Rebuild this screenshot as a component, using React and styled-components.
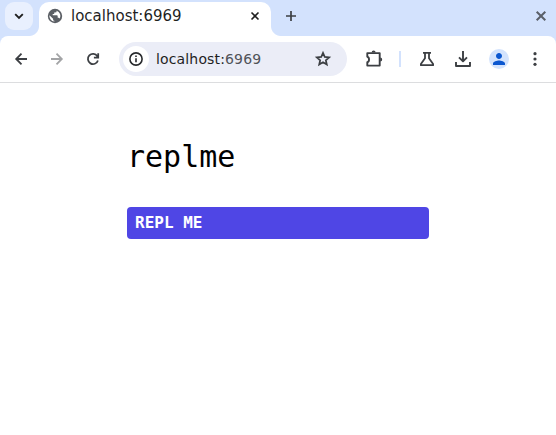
import React from "react";
import styled, { createGlobalStyle } from "styled-components";

const GlobalStyle = createGlobalStyle`
  *, *::before, *::after { box-sizing: border-box; }
  html, body { margin: 0; background: #fff; overflow: hidden; }
  button { border: 0; padding: 0; margin: 0; background: none; font: inherit; color: inherit; }
`;

const Browser = styled.div`
  display: flex;
  flex-direction: column;
  width: 556px;
  height: 435px;
  background: #d3e2fd;
  font-family: "DejaVu Sans", sans-serif;
  color: #1f1f1f;
`;

const TabStrip = styled.header`
  display: flex;
  height: 36px;
  padding-left: 5px;
`;

const TabSearch = styled.button`
  display: grid;
  place-items: center;
  width: 28px;
  height: 28px;
  margin: 2px 6px 0 0;
  border-radius: 9px;
  background: #e9f0fe;
`;

const Tab = styled.div`
  position: relative;
  display: flex;
  align-items: center;
  width: 232px;
  height: 34px;
  margin-top: 2px;
  padding: 0 8px 6px;
  border-radius: 10px 10px 0 0;
  background: #fff;

  &::before,
  &::after {
    content: "";
    position: absolute;
    bottom: 0;
    width: 10px;
    height: 10px;
  }
  &::before {
    left: -10px;
    background: radial-gradient(circle at 0 0, transparent 9.5px, #fff 10.5px);
  }
  &::after {
    right: -10px;
    background: radial-gradient(circle at 100% 0, transparent 9.5px, #fff 10.5px);
  }
`;

const TabTitle = styled.span`
  flex: 1;
  margin-left: 8px;
  font-size: 15px;
  line-height: 20px;
`;

const IconButton = styled.button`
  display: grid;
  place-items: center;
  flex: none;
  width: ${(p) => p.$w || 36}px;
  height: ${(p) => p.$h || 34}px;
  color: ${(p) => p.$color || "#3c3f43"};
`;

const NewTab = styled(IconButton)`
  margin: 2px 0 0 10px;
`;

const WindowClose = styled(IconButton)`
  margin: 2px 5px 0 auto;
`;

const Toolbar = styled.nav`
  display: flex;
  align-items: center;
  height: 47px;
  padding: 0 3px;
  border-bottom: 1px solid #dcdddf;
  border-radius: 8px 8px 0 0;
  background: #fff;
`;

const AddressBar = styled.div`
  display: flex;
  align-items: center;
  width: 229px;
  height: 34px;
  margin: 0 9px 0 8px;
  padding: 0 6px 0 4px;
  border-radius: 17px;
  background: #ebedf7;
`;

const SiteInfo = styled.span`
  display: grid;
  place-items: center;
  width: 26px;
  height: 26px;
  border-radius: 50%;
  background: #fff;
`;

const Url = styled.span`
  flex: 1;
  margin-left: 7px;
  font-size: 14px;
  letter-spacing: 0.15px;
  line-height: 18px;
`;

const Port = styled.span`
  color: #505359;
`;

const Divider = styled.span`
  width: 2px;
  height: 16px;
  margin: 0 8px 0 7px;
  background: #d3e2fd;
`;

const Avatar = styled.span`
  display: grid;
  place-items: center;
  width: 20px;
  height: 20px;
  border-radius: 50%;
  background: #d3e3fd;
  color: #0b57d0;
`;

const Page = styled.main`
  flex: 1;
  padding: 54px 127px 0;
  background: #fff;
  font-family: "DejaVu Sans Mono", monospace;
`;

const Title = styled.h1`
  margin: 0 0 30px;
  color: #000;
  font-size: 30px;
  font-weight: 400;
  line-height: 40px;
`;

const ReplButton = styled.button`
  display: block;
  width: 302px;
  height: 32px;
  padding: 0 8px;
  border-radius: 4px;
  background: #4f46e5;
  color: #fff;
  font-size: 16px;
  font-weight: 700;
  line-height: 32px;
  text-align: left;
`;

const Line = ({ size, d, width = 2, join = "miter" }) => (
  <svg
    width={size}
    height={size}
    viewBox={`0 0 ${size} ${size}`}
    fill="none"
    stroke="currentColor"
    strokeWidth={width}
    strokeLinejoin={join}
  >
    <path d={d} />
  </svg>
);

export default function App() {
  return (
    <>
      <GlobalStyle />
      <Browser>
        <TabStrip>
          <TabSearch aria-label="Search tabs">
            <Line size={12} width={1.9} d="M2.200 4.200 6 8l3.800-3.800" />
          </TabSearch>
          <Tab>
            <IconButton as="span" $w={16} $h={16} $color="#5b5f65">
              <svg width="16" height="16" viewBox="0 0 16 16">
                <circle cx="8" cy="8" r="7.200" fill="currentColor" />
                <path
                  d="M9.600 2.700v.5c0 .8-.5 1.200-1.300 1.200H7.200v1.500H5.700v1.400h3.900c.7 0 1.100.5 1.100 1.200v1.200h.7c.7 0 1.200.4 1.400 1A5.700 5.700 0 0 0 9.600 2.700z"
                  fill="#fff"
                />
                <path
                  d="M2.400 7.200l3.700 3.500v.7c0 .8.600 1.300 1.300 1.300v.9A5.700 5.700 0 0 1 2.400 7.200z"
                  fill="#fff"
                />
              </svg>
            </IconButton>
            <TabTitle>localhost:6969</TabTitle>
            <IconButton $w={16} $h={16} $color="#1f1f1f" aria-label="Close tab">
              <Line size={10} width={1.6} d="M1.500 1.500l7 7m0-7l-7 7" />
            </IconButton>
          </Tab>
          <NewTab $w={20} $h={28} aria-label="New tab">
            <Line size={12} width={1.7} d="M6 1v10M1 6h10" />
          </NewTab>
          <WindowClose $w={20} $h={28} $color="#5a5f68" aria-label="Close window">
            <Line size={12} width={2} d="M1.700 1.700l8.600 8.600m0-8.600l-8.600 8.600" />
          </WindowClose>
        </TabStrip>
        <Toolbar>
          <IconButton aria-label="Back">
            <Line size={14} width={1.8} d="M13 7H2.200M7.500 1.700 2.200 7l5.300 5.300" />
          </IconButton>
          <IconButton $color="#a3a4a6" aria-label="Forward">
            <Line size={14} width={1.8} d="M1 7h10.800M6.500 1.700 11.800 7l-5.300 5.300" />
          </IconButton>
          <IconButton aria-label="Reload">
            <Line size={14} width={1.8} d="M11.900 8.500A5.100 5.100 0 1 1 11.300 4.200L12 5.100M12.200 1.300v4.400H7.900" />
          </IconButton>
          <AddressBar>
            <SiteInfo>
              <svg width="16" height="16" viewBox="0 0 16 16" fill="none" stroke="#27292c" strokeWidth="1.6">
                <circle cx="8" cy="8" r="6.100" />
                <path d="M8 7.300v4M8 4.500v1.600" />
              </svg>
            </SiteInfo>
            <Url>
              localhost:<Port>6969</Port>
            </Url>
            <IconButton aria-label="Bookmark">
              <Line
                size={18}
                width={1.7}
                d="M9 2.900l1.750 4.050 4.400.4-3.300 2.900.95 4.300L9 12.250l-3.800 2.300.95-4.300-3.300-2.900 4.400-.4z"
              />
            </IconButton>
          </AddressBar>
          <IconButton aria-label="Extensions">
            <svg width="18" height="18" viewBox="0 0 18 18" fill="none" stroke="currentColor" strokeWidth="1.900" strokeLinejoin="round">
              <path d="M2.300 3.100h12.400v12.500H2.300V12.200c2.300-.5 2.300-4.900 0-5.400z" />
              <path d="M6.600 2.600a2 2 0 0 1 4 0zM15.200 7.400a2 2 0 0 1 0 4z" fill="currentColor" stroke="none" />
            </svg>
          </IconButton>
          <Divider />
          <IconButton aria-label="Labs">
            <Line size={18} width={1.800} join="round" d="M5 2.800h8M7 3v5.300L2.900 14v1.200h12.200V14L11 8.300V3" />
          </IconButton>
          <IconButton aria-label="Downloads">
            <Line size={18} width={1.9} join="round" d="M9 1v10M5 7.300 9 11.300l4-4M2 12v4h14v-4" />
          </IconButton>
          <IconButton aria-label="Profile">
            <Avatar>
              <svg width="18" height="18" viewBox="0 0 24 24" fill="currentColor">
                <path d="M12 12c2.210 0 4-1.790 4-4s-1.790-4-4-4-4 1.790-4 4 1.790 4 4 4zm0 2c-2.670 0-8 1.340-8 4v2h16v-2c0-2.660-5.330-4-8-4z" />
              </svg>
            </Avatar>
          </IconButton>
          <IconButton aria-label="Menu">
            <svg width="18" height="18" viewBox="0 0 18 18" fill="currentColor">
              <circle cx="9" cy="3.700" r="1.600" />
              <circle cx="9" cy="9" r="1.600" />
              <circle cx="9" cy="14.300" r="1.600" />
            </svg>
          </IconButton>
        </Toolbar>
        <Page>
          <Title>replme</Title>
          <ReplButton>REPL ME</ReplButton>
        </Page>
      </Browser>
    </>
  );
}
